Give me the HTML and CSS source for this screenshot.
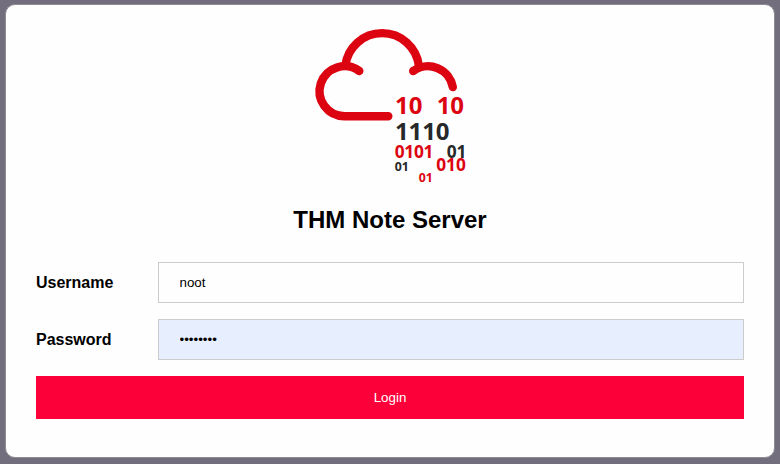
FILE: index.html
```html
<!DOCTYPE html>
<html lang="en">
<head>
<meta charset="utf-8">
<title>THM Note Server</title>
<link rel="stylesheet" href="styles.css">
</head>
<body>
<main class="card">
  <svg class="logo" viewBox="310 20 160 170" role="img" aria-label="Cloud logo">
    <g class="cloud">
      <path d="M388.3 116.2H344.4A25 25 0 1 1 359.3 71"/>
      <path class="butt" d="M345.3 66A37.04 37.04 0 0 1 418.9 66"/>
      <path d="M413.2 71A25.3 25.3 0 0 1 452.8 87"/>
    </g>
    <g class="bits">
      <text x="395" y="114" font-size="24" textLength="27.4">10</text>
      <text x="436.7" y="114" font-size="24" textLength="27.4">10</text>
      <text class="dark" x="395" y="139.6" font-size="24" textLength="54.6">1110</text>
      <text x="394.7" y="157.6" font-size="17.3" textLength="38.8">0101</text>
      <text class="dark" x="446.7" y="157.6" font-size="17.3" textLength="19.6">01</text>
      <text class="dark" x="394.8" y="171" font-size="12.3" textLength="14">01</text>
      <text x="436.2" y="171" font-size="17.3" textLength="29.6">010</text>
      <text x="418.8" y="182" font-size="12.3" textLength="14">01</text>
    </g>
  </svg>
  <h1>THM Note Server</h1>
  <form>
    <div class="row"><label for="user">Username</label><input id="user" type="text" value="noot"></div>
    <div class="row"><label for="pass">Password</label><input id="pass" class="filled" type="password" value="password"></div>
    <button type="button">Login</button>
  </form>
</main>
</body>
</html>
```

FILE: styles.css
```css
* { box-sizing: border-box; }
body {
  margin: 0;
  height: 464px;
  padding: 4px 5px 6px;
  background: #736e7e;
  font-family: "Liberation Sans", Arial, sans-serif;
  overflow: hidden;
}
.card {
  height: 454px;
  padding: 15px 30px 0;
  border: 1px solid #8f8d94;
  background: #fefefe;
  border-radius: 10px;
}
.logo { display: block; width: 160px; height: 170px; margin: 0 auto 0 274px; }
.cloud { fill: none; stroke: #dc0410; stroke-width: 8.4; stroke-linecap: round; }
.cloud .butt { stroke-linecap: butt; }
.bits { fill: #dc0410; font-family: "Open Sans", sans-serif; font-weight: 700; }
.dark { fill: #262829; }
h1 { margin: 16px 0 0; font-size: 24px; line-height: 28px; text-align: center; color: #000; }
form { margin-top: 28px; }
.row { display: flex; align-items: center; margin-bottom: 16px; }
label { width: 122px; font-size: 16px; font-weight: 700; color: #000; }
input {
  width: 586px;
  height: 41px;
  padding: 0 20.5px;
  border: 1px solid #ccc;
  background: #fefefe;
  color: #000;
  font: 13.333px "Liberation Sans", Arial, sans-serif;
}
.filled { background: #e7eefe; }
button {
  display: block;
  width: 100%;
  height: 43px;
  border: 0;
  background: #fc003a;
  color: #fff;
  font: 13.333px "Liberation Sans", Arial, sans-serif;
}
```
